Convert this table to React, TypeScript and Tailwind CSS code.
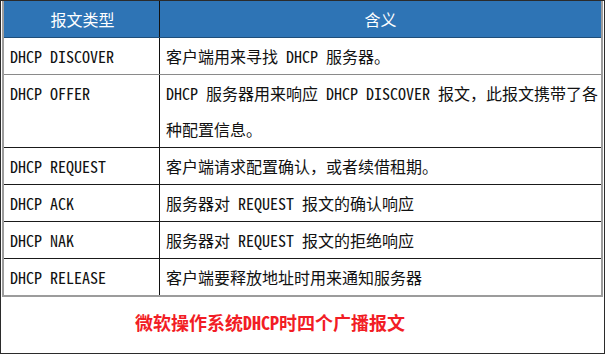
const rows: { type: string; meaning: React.ReactNode; tall?: boolean }[] = [
  { type: 'DHCP DISCOVER', meaning: '客户端用来寻找 DHCP 服务器。' },
  {
    type: 'DHCP OFFER',
    meaning: (
      <>
        DHCP 服务器用来响应 DHCP DISCOVER 报文，此报文携带了各
        <br />
        种配置信息。
      </>
    ),
    tall: true,
  },
  { type: 'DHCP REQUEST', meaning: '客户端请求配置确认，或者续借租期。' },
  { type: 'DHCP ACK', meaning: '服务器对 REQUEST 报文的确认响应' },
  { type: 'DHCP NAK', meaning: '服务器对 REQUEST 报文的拒绝响应' },
  { type: 'DHCP RELEASE', meaning: '客户端要释放地址时用来通知服务器' },
]

export default function App() {
  return (
    <div className="w-[605px] h-[354px] bg-white border border-[#2b2b2b] px-[1px] flex flex-col font-['Noto_Sans_Mono_CJK_SC','Noto_Sans_CJK_SC',monospace] text-[16px] text-[#111]">
      <div className="border-x-2 border-b-2 border-[#9c9c9c]">
        <div className="grid grid-cols-[156px_1fr] h-[37px] bg-[#2e74b5] border-b border-[#1f4e79] text-white leading-[36px]">
          <div className="border-r border-[#111] text-center pl-[2px]">报文类型</div>
          <div className="text-center">含义</div>
        </div>
        {rows.map((r, i) => (
          <div
            key={r.type}
            className={`grid grid-cols-[156px_1fr] leading-[36px] ${
              i === rows.length - 1 ? '' : i === 0 ? 'border-b border-[#8a8a8a]' : 'border-b border-[#1a1a1a]'
            }`}
          >
            <div className="border-r border-[#111] pl-[6px] whitespace-nowrap">{r.type}</div>
            <div className="pl-[6px] whitespace-nowrap">{r.meaning}</div>
          </div>
        ))}
      </div>
      <div className="flex-1 flex items-center pl-[133px] pb-[6px]">
        <span className="text-[18px] font-bold text-[#f21d25]">微软操作系统DHCP时四个广播报文</span>
      </div>
    </div>
  )
}
